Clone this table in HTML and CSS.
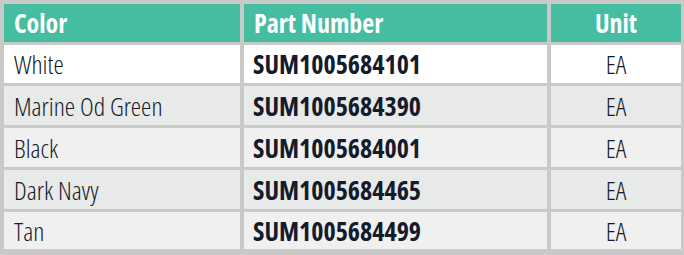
FILE: index.html
```html
<!DOCTYPE html>
<html>
<head>
<meta charset="utf-8">
<link rel="stylesheet" href="styles.css">
</head>
<body>
<div class="table">
  <div class="cell head">Color</div>
  <div class="cell head">Part Number</div>
  <div class="cell head center">Unit</div>

  <div class="cell r1">White</div>
  <div class="cell r1 pn">SUM1005684101</div>
  <div class="cell r1 center">EA</div>

  <div class="cell r2">Marine Od Green</div>
  <div class="cell r2 pn">SUM1005684390</div>
  <div class="cell r2 center">EA</div>

  <div class="cell r3">Black</div>
  <div class="cell r3 pn">SUM1005684001</div>
  <div class="cell r3 center">EA</div>

  <div class="cell r2">Dark Navy</div>
  <div class="cell r2 pn">SUM1005684465</div>
  <div class="cell r2 center">EA</div>

  <div class="cell r3">Tan</div>
  <div class="cell r3 pn">SUM1005684499</div>
  <div class="cell r3 center">EA</div>
</div>
</body>
</html>
```
FILE: styles.css
```css
html, body {
  margin: 0;
  padding: 0;
  background: #c9c9c9;
}
.table {
  width: 684px;
  height: 255px;
  box-sizing: border-box;
  padding: 4px 3px 6px 4px;
  background: #c9c9c9;
  display: grid;
  grid-template-columns: 236px 303px 130px;
  grid-template-rows: 38px 38px 39px 39px 39px 37px;
  column-gap: 4px;
  row-gap: 3px;
  font-family: "Open Sans", "Liberation Sans", sans-serif;
  font-stretch: 77%;
}
.cell {
  display: flex;
  align-items: center;
  padding-left: 10px;
  font-size: 26px;
  font-weight: 300;
  color: #151b2a;
  white-space: nowrap;
}
.head {
  background: #45bda1;
  color: #ffffff;
  font-weight: 700;
  font-size: 26px;
}
.pn {
  font-weight: 700;
  padding-left: 9px;
}
.center {
  justify-content: center;
  padding-left: 0;
}
.r1 { background: #ffffff; }
.r2 { background: #e8e9e9; }
.r3 { background: #f0f0f0; }
```
